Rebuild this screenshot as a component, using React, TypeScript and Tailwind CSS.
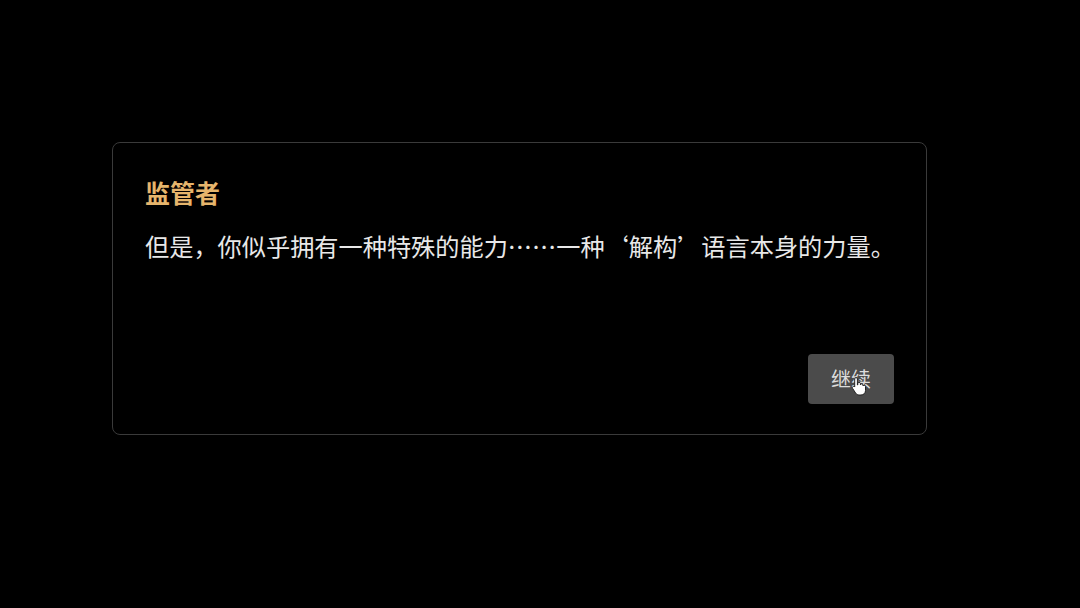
import React from 'react';

const FONT = { fontFamily: '"Noto Sans CJK SC", "Noto Sans", sans-serif' };

const HandCursor: React.FC = () => (
  <svg width="16" height="20" viewBox="0 0 16 20" className="absolute left-[43px] top-[22px]">
    <path
      d="M5 1.5c.8 0 1.4.6 1.4 1.4V9l.4-.1V7.6c0-.8.6-1.3 1.3-1.3s1.3.5 1.3 1.3v1.3c.2-.7.7-1.1 1.3-1.1.7 0 1.3.6 1.3 1.3v.9c.2-.5.7-.8 1.2-.8.7 0 1.3.6 1.3 1.3v4.1c0 2.5-2 4.4-4.5 4.4H8.1c-1.4 0-2.6-.7-3.4-1.8L1.6 12.4c-.4-.6-.3-1.4.3-1.8.6-.4 1.3-.3 1.7.3l.1.1V2.9c0-.8.6-1.4 1.3-1.4z"
      fill="#ffffff"
      stroke="#222"
      strokeWidth="1"
    />
  </svg>
);

export default function App() {
  return (
    <div className="w-[1080px] h-[608px] bg-black overflow-hidden" style={FONT}>
      <div className="ml-[112px] mt-[142px] w-[815px] h-[293px] border border-[#3a3a3a] rounded-lg pt-8 px-8 pb-[30px] flex flex-col">
        <div className="text-[25px] leading-[32px] font-bold text-[#e6b56c] mt-[1px]">监管者</div>
        <p className="mt-[22px] text-[24.2px] leading-[32px] text-[#e8e8e8] whitespace-nowrap">
          但是，你似乎拥有一种特殊的能力……一种‘解构’语言本身的力量。
        </p>
        <div className="flex-1" />
        <div className="flex justify-end">
          <button className="relative w-[86px] h-[50px] rounded bg-[#4b4b4b] text-[20px] text-[#dddddd]">
            继续
            <HandCursor />
          </button>
        </div>
      </div>
    </div>
  );
}
